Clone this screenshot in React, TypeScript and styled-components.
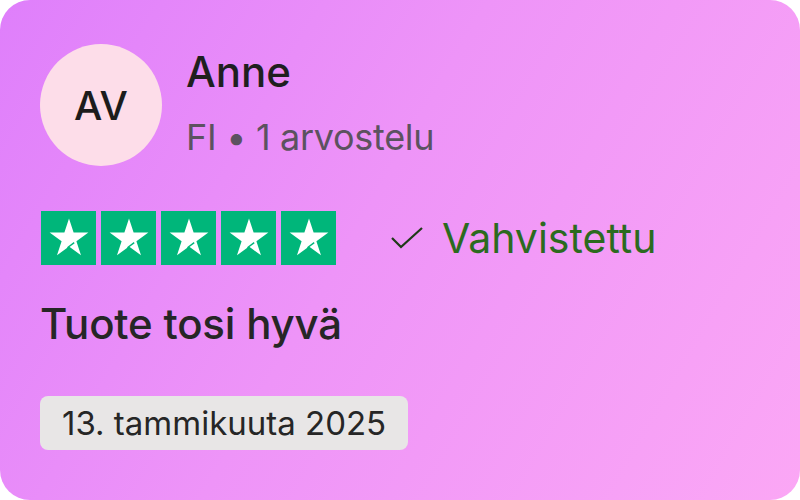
import styled, { createGlobalStyle } from 'styled-components'

const GlobalStyle = createGlobalStyle`
  html, body {
    margin: 0;
    padding: 0;
    background: #ffffff;
  }
  body {
    font-family: Inter, 'Noto Sans', sans-serif;
  }
`

const Card = styled.div`
  box-sizing: border-box;
  width: 800px;
  height: 500px;
  border-radius: 30px;
  background: linear-gradient(120deg, #df7ffb 0%, #ee94f8 45%, #fba7f5 100%);
  padding: 44px 40px 0 40px;
  display: flex;
  flex-direction: column;
`

const Header = styled.div`
  display: flex;
  align-items: flex-start;
  gap: 24px;
`

const Avatar = styled.div`
  width: 122px;
  height: 122px;
  border-radius: 50%;
  background: #fddde9;
  color: #1c1c1c;
  display: flex;
  align-items: center;
  justify-content: center;
  font-size: 40px;
  font-weight: 500;
  flex-shrink: 0;
`

const Info = styled.div`
  display: flex;
  flex-direction: column;
  padding-top: 3px;
`

const Name = styled.div`
  font-size: 42px;
  font-weight: 500;
  color: #1f1f1f;
  line-height: 50px;
`

const Meta = styled.div`
  margin-top: 18px;
  font-size: 36px;
  color: #5c5260;
  line-height: 44px;
  letter-spacing: -0.3px;
`

const RatingRow = styled.div`
  margin-top: 45px;
  display: flex;
  align-items: center;
`

const Stars = styled.div`
  display: flex;
  gap: 5px;
  padding-left: 1px;
`

const StarBox = styled.div`
  width: 55px;
  height: 54px;
  background: #00b67a;
  display: flex;
  align-items: center;
  justify-content: center;
`

const Verified = styled.div`
  margin-left: 54px;
  display: flex;
  align-items: center;
  gap: 18px;
  color: #2c6a1f;
  font-size: 41px;
  font-weight: 400;
  line-height: 48px;
`

const Title = styled.div`
  margin-top: 34px;
  font-size: 42px;
  font-weight: 500;
  color: #262626;
  line-height: 50px;
  letter-spacing: -0.2px;
`

const DatePill = styled.div`
  margin-top: 47px;
  align-self: flex-start;
  background: #e8e6e6;
  border-radius: 8px;
  padding: 0 22px;
  height: 54px;
  display: flex;
  align-items: center;
  font-size: 33px;
  color: #262626;
`

const Star = () => (
  <svg width="48" height="48" viewBox="0 0 24 24">
    <path
      fill="#fff"
      d="M12 2.2l2.3 7.05h7.4l-6 4.35 2.3 7.05-6-4.35-6 4.35 2.3-7.05-6-4.35h7.4z"
    />
    <path d="M11.2 16.9l3.4-2.6" stroke="#00b67a" strokeWidth="0.7" fill="none" />
  </svg>
)

const Check = () => (
  <svg width="34" height="24" viewBox="0 0 34 24">
    <path d="M2 12l9 9L32 2" fill="none" stroke="#1f3b17" strokeWidth="2.2" />
  </svg>
)

export default function App() {
  return (
    <>
      <GlobalStyle />
      <Card>
        <Header>
          <Avatar>AV</Avatar>
          <Info>
            <Name>Anne</Name>
            <Meta>FI • 1 arvostelu</Meta>
          </Info>
        </Header>
        <RatingRow>
          <Stars>
            {[0, 1, 2, 3, 4].map((i) => (
              <StarBox key={i}>
                <Star />
              </StarBox>
            ))}
          </Stars>
          <Verified>
            <Check />
            Vahvistettu
          </Verified>
        </RatingRow>
        <Title>Tuote tosi hyvä</Title>
        <DatePill>13. tammikuuta 2025</DatePill>
      </Card>
    </>
  )
}
